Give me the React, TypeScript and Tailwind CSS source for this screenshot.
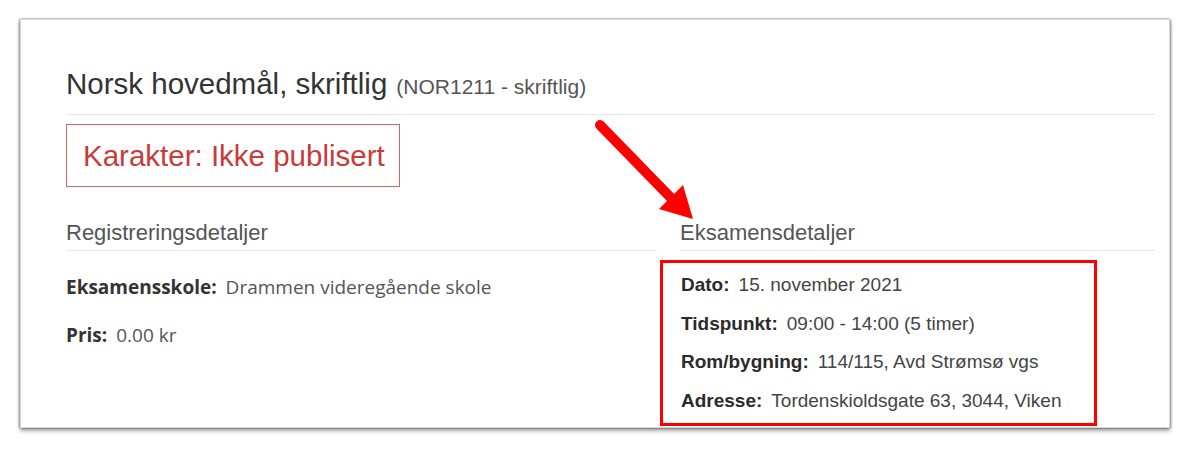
const arial = "font-['Liberation_Sans',Arial,sans-serif]";
const openSans = "font-['Open_Sans','Noto_Sans',sans-serif]";

const exam = [
  { label: "Dato:", value: "15. november 2021" },
  { label: "Tidspunkt:", value: "09:00 - 14:00 (5 timer)" },
  { label: "Rom/bygning:", value: "114/115, Avd Strømsø vgs" },
  { label: "Adresse:", value: "Tordenskioldsgate 63, 3044, Viken" },
];

const registration = [
  { label: "Eksamensskole:", value: "Drammen videregående skole" },
  { label: "Pris:", value: "0.00 kr" },
];

// red annotation arrow drawn over the card
const Arrow = () => (
  <svg className="absolute left-0 top-0 pointer-events-none" width="1200" height="450">
    <line x1="600" y1="125" x2="672" y2="199" stroke="#ff0000" strokeWidth="10" strokeLinecap="round" />
    <polygon points="659,209 683,185 693,219" fill="#ff0000" />
  </svg>
);

export default function App() {
  return (
    <div className="relative w-[1200px] h-[450px] bg-white pt-[19px] pl-[20px] overflow-hidden">
      <div
        className="w-[1150px] h-[409px] bg-white border border-[#d9d9d9] pl-[45px] pr-[14px] pt-[47px]
        shadow-[-1px_0_2px_rgba(0,0,0,0.35),1px_0_2px_rgba(0,0,0,0.35),0_3px_4px_rgba(0,0,0,0.35)]"
      >
        {/* title */}
        <div className={`${arial} pb-[8px] border-b border-[#e6e6e6] leading-[34px] text-[#333]`}>
          <span className="text-[29.5px] leading-[34px]">Norsk hovedmål, skriftlig</span>
          <span className="text-[21px] leading-[20px] text-[#555] ml-[9px]">(NOR1211 - skriftlig)</span>
        </div>

        {/* grade */}
        <div
          className={`${arial} inline-block mt-[9px] border border-[#d46565] pl-[16px] pr-[14px] pt-[14px] pb-[13px]
          text-[29.5px] leading-[34px] text-[#c73b3b]`}
        >
          Karakter: Ikke publisert
        </div>

        <div className="flex gap-[23px] mt-[33px]">
          {/* registration */}
          <div className="w-[591px]">
            <h2 className={`${arial} text-[22px] leading-[26px] text-[#555] pb-[4px] border-b border-[#e6e6e6]`}>
              Registreringsdetaljer
            </h2>
            <div className={`${openSans} flex flex-col gap-[22px] mt-[23px] text-[19px] leading-[26px]`}>
              {registration.map((r) => (
                <div key={r.label}>
                  <span className="font-bold text-[#333]">{r.label}</span>
                  <span className="text-[#555] ml-[9px]">{r.value}</span>
                </div>
              ))}
            </div>
          </div>

          {/* exam */}
          <div className="flex-1">
            <h2 className={`${arial} text-[22px] leading-[26px] text-[#555] pb-[4px] border-b border-[#e6e6e6]`}>
              Eksamensdetaljer
            </h2>
            <div
              className={`${arial} w-[437px] ml-[-20px] mt-[9px] border-[3px] border-[#ff0000] pl-[18px] pt-[11px] pb-[11px]
              flex flex-col gap-[16.5px] text-[19px] leading-[22px]`}
            >
              {exam.map((r) => (
                <div key={r.label}>
                  <span className="font-bold text-[#2b2b2b]">{r.label}</span>
                  <span className="text-[#444] ml-[9px]">{r.value}</span>
                </div>
              ))}
            </div>
          </div>
        </div>
      </div>
      <Arrow />
    </div>
  );
}
